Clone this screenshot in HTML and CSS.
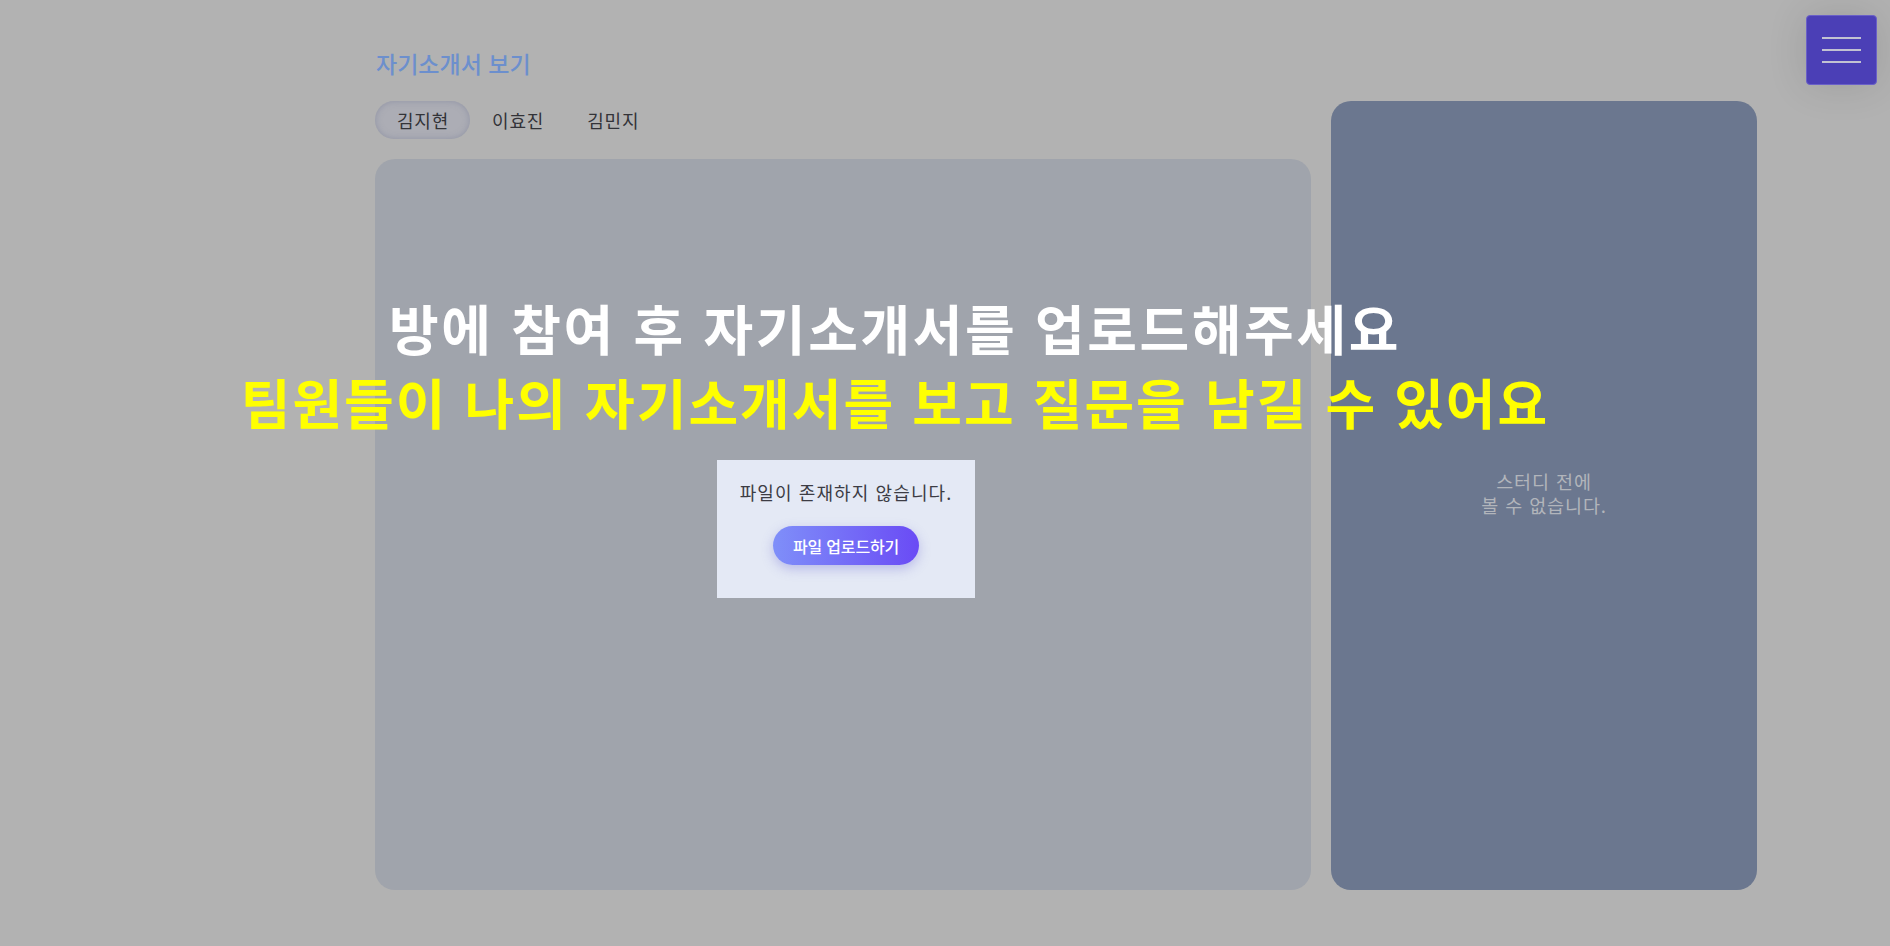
FILE: index.html
```html
<!DOCTYPE html>
<html lang="ko">
<head>
<meta charset="utf-8">
<title>자기소개서 보기</title>
<link rel="stylesheet" href="styles.css">
</head>
<body>
<div class="page">
  <main class="layout">
    <section class="main-col">
      <h1 class="title">자기소개서 보기</h1>
      <nav class="tabs">
        <button class="tab active">김지현</button>
        <button class="tab">이효진</button>
        <button class="tab">김민지</button>
      </nav>
      <div class="doc-card">
        <div class="empty-box">
          <p class="empty-text">파일이 존재하지 않습니다.</p>
          <button class="upload-btn">파일 업로드하기</button>
        </div>
      </div>
    </section>
    <aside class="side-card">
      <p class="side-text">스터디 전에<br>볼 수 없습니다.</p>
    </aside>
  </main>

  <div class="guide">
    <p class="guide-line white">방에 참여 후 자기소개서를 업로드해주세요</p>
    <p class="guide-line yellow">팀원들이 나의 자기소개서를 보고 질문을 남길 수 있어요</p>
  </div>

  <button class="menu-btn" aria-label="menu">
    <span></span><span></span><span></span>
  </button>
</div>
</body>
</html>
```

FILE: styles.css
```css
* { box-sizing: border-box; }
html, body {
  margin: 0;
  padding: 0;
  width: 1890px;
  height: 946px;
  overflow: hidden;
  background: #b2b2b2;
  font-family: "Noto Sans CJK KR", "Noto Sans", sans-serif;
}
.page {
  position: relative;
  width: 1890px;
  height: 946px;
}
.layout {
  display: flex;
  padding-left: 375px;
  gap: 20px;
}
.main-col {
  width: 936px;
  display: flex;
  flex-direction: column;
}
.title {
  margin: 47px 0 0 1px;
  height: 33px;
  font-size: 23px;
  line-height: 33px;
  font-weight: 500;
  color: #6c8fcd;
  letter-spacing: 0;
}
.tabs {
  display: flex;
  margin-top: 21px;
  height: 38px;
}
.tab {
  border: none;
  background: transparent;
  font-family: inherit;
  font-size: 18px;
  font-weight: 400;
  letter-spacing: 0.8px;
  color: #333338;
  padding: 0 21px 0 22px;
  height: 38px;
  line-height: 34px;
  border-radius: 19px;
}
.tab.active {
  background: #acadb5;
  box-shadow: inset 0 0 6px rgba(120, 126, 152, 0.55);
}
.doc-card {
  margin-top: 20px;
  height: 731px;
  background: #a0a4ac;
  border-radius: 20px;
  display: flex;
  align-items: center;
  justify-content: center;
  padding-left: 6px;
  padding-top: 9px;
}
.empty-box {
  width: 258px;
  height: 138px;
  background: #e4e9f5;
  display: flex;
  flex-direction: column;
  align-items: center;
  padding-top: 20px;
}
.empty-text {
  margin: 0;
  font-size: 18px;
  line-height: 24px;
  color: #3c3c44;
  letter-spacing: 1.1px;
}
.upload-btn {
  margin-top: 22px;
  width: 146px;
  height: 39px;
  border: none;
  border-radius: 20px;
  background: linear-gradient(90deg, #7f8ff9 0%, #6a4bf5 100%);
  color: #ffffff;
  font-family: inherit;
  font-size: 16px;
  font-weight: 500;
  letter-spacing: -0.2px;
  box-shadow: 0 4px 12px rgba(104, 100, 210, 0.35);
}
.side-card {
  margin-top: 101px;
  width: 426px;
  height: 789px;
  background: #6b778f;
  border-radius: 20px;
  display: flex;
  align-items: center;
  justify-content: center;
}
.side-text {
  margin: 0 0 5px 0;
  text-align: center;
  font-size: 18.5px;
  line-height: 24px;
  color: #b2b5bb;
  letter-spacing: 0.9px;
}
.guide {
  position: absolute;
  left: 0;
  top: 291px;
  width: 1790px;
  text-align: center;
}
.guide-line {
  margin: 0;
  font-size: 54px;
  line-height: 74px;
  font-weight: 700;
  letter-spacing: 2px;
  white-space: nowrap;
}
.guide-line.white { color: #ffffff; letter-spacing: 2.6px; }
.guide-line.yellow { color: #ffff00; }
.menu-btn {
  position: absolute;
  left: 1806px;
  top: 15px;
  width: 71px;
  height: 70px;
  border: 1px solid #6a60c8;
  border-radius: 4px;
  background: #4b3fb6;
  box-shadow: 0 0 40px rgba(0, 0, 0, 0.12);
  display: flex;
  flex-direction: column;
  align-items: center;
  justify-content: center;
  gap: 10px;
  padding: 0;
}
.menu-btn span {
  display: block;
  width: 39px;
  height: 2px;
  background: #c2c2d2;
}
```
